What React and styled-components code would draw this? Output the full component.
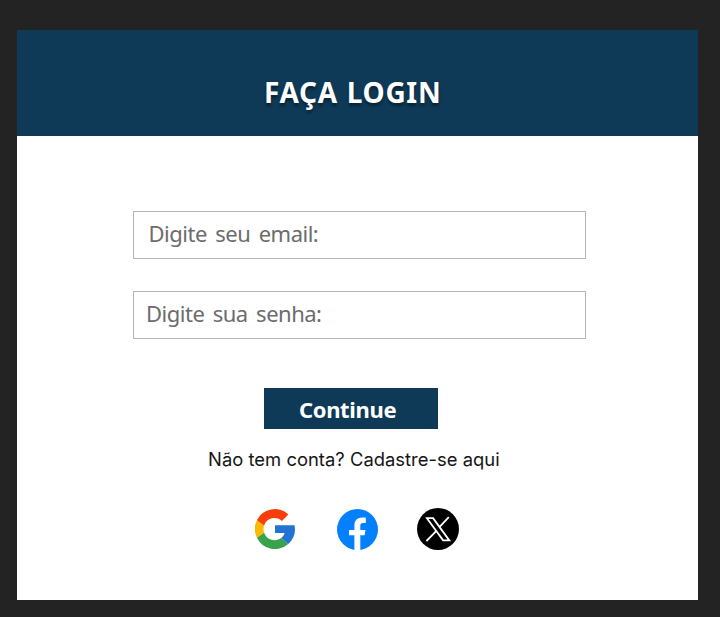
import React from "react";
import styled, { createGlobalStyle } from "styled-components";

const GlobalStyle = createGlobalStyle`
  * { box-sizing: border-box; }
  body { margin: 0; background: #232323; }
`;

const Page = styled.main`
  height: 617px;
  padding: 30px 22px 17px 17px;
  background: #232323;
  overflow: hidden;
  font-family: "Noto Sans", sans-serif;
`;

const Card = styled.section`
  height: 570px;
  background: #fff;
`;

const Header = styled.header`
  height: 105.5px;
  padding: 42px 0 0 247px;
  background: #0e3a57;
`;

const Title = styled.h1`
  margin: 0;
  font-size: 28px;
  line-height: 40px;
  font-weight: 700;
  letter-spacing: 0.7px;
  word-spacing: 1px;
  white-space: nowrap;
  color: #fff;
  text-shadow: 0 3px 3px rgba(0, 0, 0, 0.4);
`;

const Form = styled.div`
  display: flex;
  flex-direction: column;
  padding: 75.5px 112px 0 116px;
`;

const Field = styled.div`
  height: 48px;
  margin-bottom: 32px;
  padding-left: ${(p) => p.$inset}px;
  border: 1px solid #b4b4b4;
  font-size: 22px;
  line-height: 43px;
  letter-spacing: -0.5px;
  word-spacing: 3.2px;
  white-space: nowrap;
  color: #6c6c6c;
`;

const SubmitButton = styled.button`
  width: 174px;
  height: 41px;
  margin: 17px 0 0 131px;
  padding: 3px 0 1px 35px;
  border: 0;
  background: #0e3a57;
  color: #fff;
  font: 700 22px/37px "Noto Sans", sans-serif;
  letter-spacing: -0.35px;
  text-align: left;
  white-space: nowrap;
`;

const SignUp = styled.p`
  margin: 17px 0 0 75px;
  font: 400 18.4px/26px Inter, sans-serif;
  letter-spacing: 0.02px;
  white-space: nowrap;
  color: #161616;
`;

const Socials = styled.div`
  display: flex;
  align-items: center;
  height: 42px;
  margin: 36px 0 0 122px;
`;

const Icon = styled.svg`
  display: block;
  flex: none;
  width: ${(p) => p.$size}px;
  height: ${(p) => p.$size}px;
  margin-right: ${(p) => p.$gap || 0}px;
`;

export default function App() {
  return (
    <Page>
      <GlobalStyle />
      <Card>
        <Header>
          <Title>FAÇA LOGIN</Title>
        </Header>
        <Form>
          <Field $inset={14.5}>Digite seu email:</Field>
          <Field $inset={12}>Digite sua senha:</Field>
          <SubmitButton type="button">Continue</SubmitButton>
          <SignUp>Não tem conta? Cadastre-se aqui</SignUp>
          <Socials>
            <Icon $size={40} $gap={42} viewBox="0 0 40 40" aria-label="Google">
              <path fill="#fbb905" d="M1.9 11.2a20 20 0 0 0 0 17.6l7.2-5a11.4 11.4 0 0 1 0-7.4z" />
              <path fill="#f93e0b" d="M1.9 11.2A20 20 0 0 1 33.4 5.4l-6.5 6.5A10.9 10.9 0 0 0 9.1 16.4z" />
              <path fill="#38a34a" d="M1.9 28.8A20 20 0 0 0 33.2 35l-7-6.1A11 11 0 0 1 9.1 23.8z" />
              <path fill="#2373d4" d="M20 16.2h19.5A20 20 0 0 1 33.2 35l-7-6.1a8.5 8.5 0 0 0 3.4-4.9H20z" />
            </Icon>
            <Icon $size={41} $gap={39} viewBox="0 0 41 41" aria-label="Facebook">
              <circle cx="20.5" cy="20.5" r="20.5" fill="#0580fd" />
              <path fill="#fff" d="M17.4 41V26.3h-5.4v-5.4h5.4v-4.5c0-5.1 3-8 7.9-8 1.6 0 3.5.2 3.5.2v5.3h-2.6c-2.2 0-2.9 1.1-2.9 2.7v4.3h5.2l-.9 5.4h-4.3V41z" />
            </Icon>
            <Icon $size={42} viewBox="0 0 42 42" aria-label="X">
              <circle cx="21" cy="21" r="21" fill="#000" />
              <path fill="none" stroke="#fff" strokeWidth="1.8" d="M9.9 10.2h6.2l16.2 22.2h-6.2zM31.8 9.2l-9.2 9.6M19.4 22.9 9.4 33" />
            </Icon>
          </Socials>
        </Form>
      </Card>
    </Page>
  );
}
